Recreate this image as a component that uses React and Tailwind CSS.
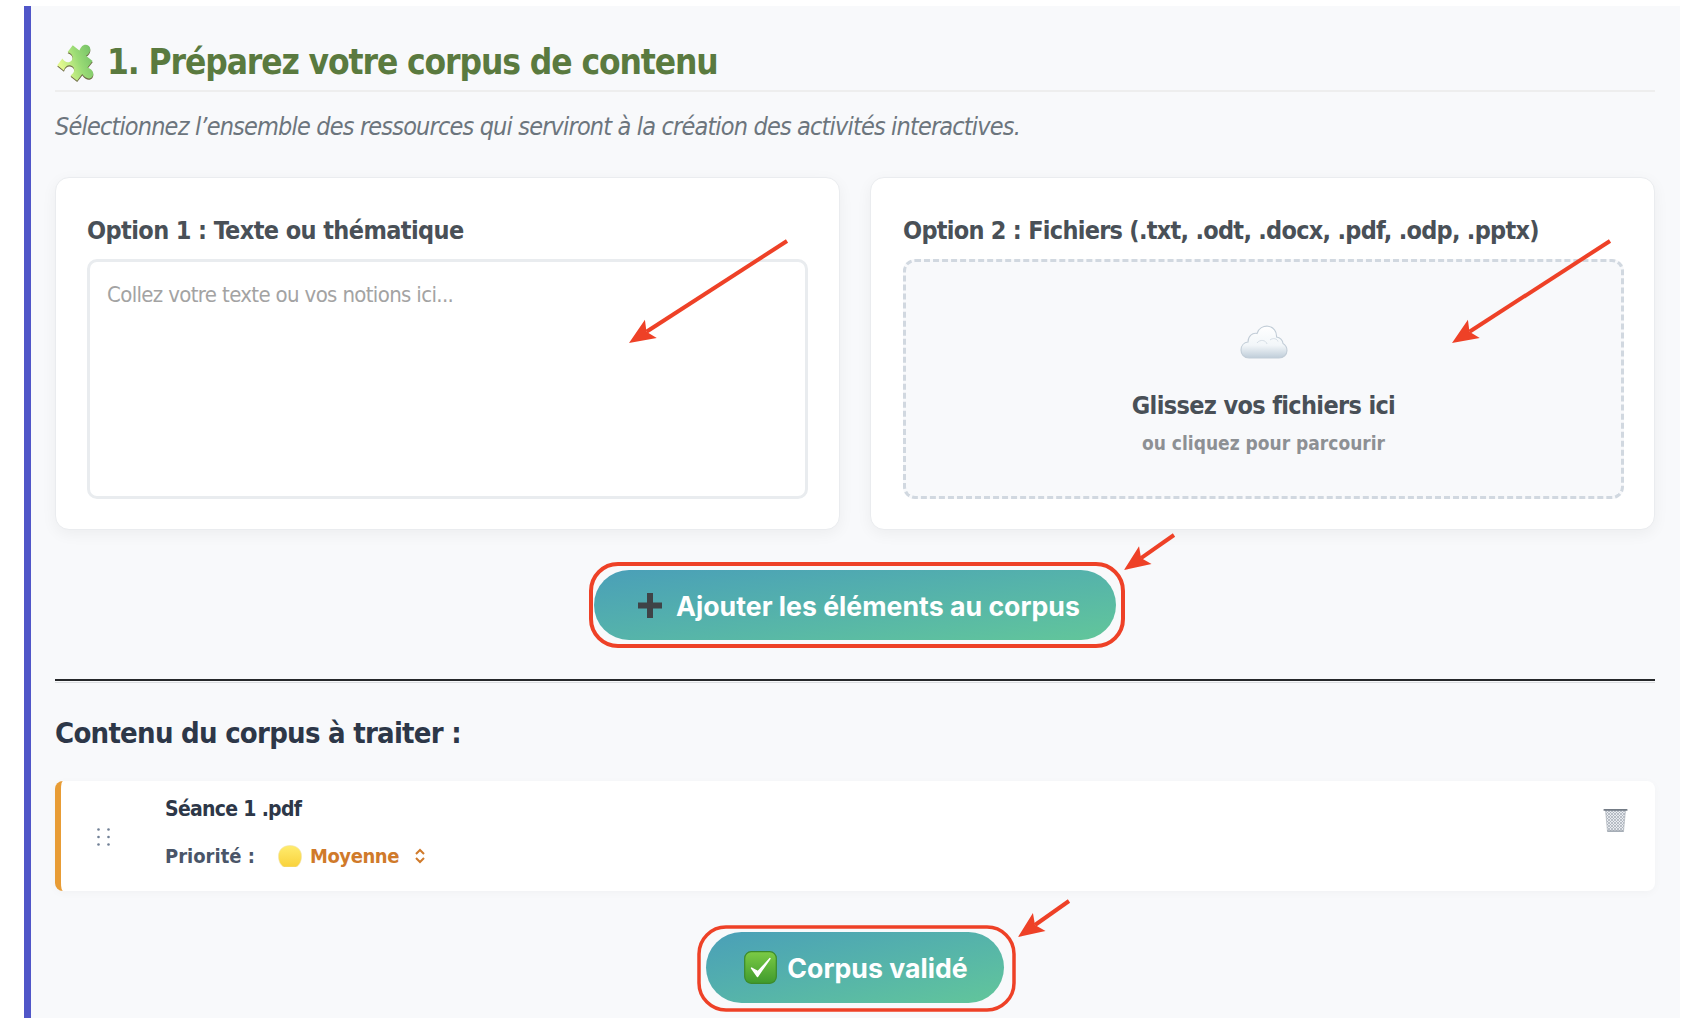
import React from "react";

const F = { fontFamily: '"DejaVu Sans Condensed", "DejaVu Sans", sans-serif' };
const I = { fontFamily: 'Inter, sans-serif' };

function Puzzle() {
  const d = "M-12,-12 H-4 C-6,-18 -3,-21 0,-21 C3,-21 6,-18 4,-12 H12 V-4 C18,-6 21,-3 21,0 C21,3 18,6 12,4 V12 H4 C6,7 3,4 0,4 C-3,4 -6,7 -4,12 H-12 V4 C-7,6 -4,3 -4,0 C-4,-3 -7,-6 -12,-4 Z";
  return (
    <svg width="43" height="42" viewBox="-20 -20 40 40" className="shrink-0 overflow-visible">
      <defs>
        <linearGradient id="pz" x1="0.8" y1="0" x2="0.2" y2="1">
          <stop offset="0" stopColor="#68b862" />
          <stop offset="0.55" stopColor="#9adb75" />
          <stop offset="1" stopColor="#e2f98f" />
        </linearGradient>
      </defs>
      <g transform="translate(-1.5,1) rotate(38)">
        <path transform="translate(0.8,0.9)" fill="#6f6a45" d={d} />
        <path fill="url(#pz)" d={d} />
      </g>
    </svg>
  );
}

function Cloud() {
  return (
    <svg width="48" height="34" viewBox="0 0 48 34">
      <defs>
        <linearGradient id="cl" x1="0" y1="0" x2="0" y2="1">
          <stop offset="0" stopColor="#ffffff" />
          <stop offset="0.6" stopColor="#f2f6f9" />
          <stop offset="1" stopColor="#bfcdd9" />
        </linearGradient>
      </defs>
      <path
        d="M9,33 C3.5,33 1,28.5 1,25 C1,20.5 4,17.5 8,17 C8,11 12.5,7.5 17,8.5 C18.5,3 23.5,0.8 28,1.2 C33.5,2 37,6.5 36.5,12 C40,12.5 42.5,15 43,18.5 C45.5,20 47,22.5 47,25.5 C47,29.5 43.5,33 39,33 Z"
        fill="url(#cl)"
        stroke="#c2cdd7"
        strokeWidth="1.1"
      />
      <path d="M17,18 C20,14 26,15 27,19 M30,15 C33,12.5 37,13.5 38,16.5" fill="none" stroke="#d5dee6" strokeWidth="1" />
    </svg>
  );
}

function Check() {
  return (
    <svg width="33" height="33" viewBox="0 0 33 33" className="shrink-0">
      <defs>
        <linearGradient id="ck" x1="0" y1="0" x2="0" y2="1">
          <stop offset="0" stopColor="#7ccb46" />
          <stop offset="1" stopColor="#3f9a2c" />
        </linearGradient>
      </defs>
      <rect x="0.7" y="0.7" width="31.6" height="31.6" rx="6.5" fill="url(#ck)" stroke="#3c8a2a" strokeWidth="1.2" />
      <path d="M7.5,17 L13.5,25.5 L26,7.5 L14,20.5 Z" fill="#fff" stroke="#fff" strokeWidth="1.4" strokeLinejoin="round" />
    </svg>
  );
}

function Trash() {
  return (
    <svg width="25" height="24" viewBox="0 0 25 24">
      <defs>
        <pattern id="mesh" width="3" height="3" patternUnits="userSpaceOnUse">
          <rect width="3" height="3" fill="#e8ebef" />
          <path d="M0,0 L3,3 M3,0 L0,3" stroke="#a4abb4" strokeWidth="0.7" />
        </pattern>
      </defs>
      <path d="M2.5,2 H22.5 L20.5,23.5 H4.5 Z" fill="url(#mesh)" stroke="#a4abb4" strokeWidth="0.6" />
      <rect x="0.5" y="1" width="24" height="1.8" rx="0.6" fill="#747c86" />
      <rect x="4.5" y="22.3" width="16" height="1.6" fill="#a4abb4" />
    </svg>
  );
}

function Circle() {
  return (
    <svg width="24" height="22" viewBox="0 0 24 22" className="shrink-0">
      <defs>
        <linearGradient id="yc" x1="0" y1="0" x2="0" y2="1">
          <stop offset="0" stopColor="#ffec6e" />
          <stop offset="1" stopColor="#f9d23c" />
        </linearGradient>
      </defs>
      <path d="M6,22 C2,20 0.5,15.5 0.5,11 C0.5,5 5,0.5 12,0.5 C19,0.5 23.5,5 23.5,11 C23.5,15.5 22,20 18,22 Z" fill="url(#yc)" stroke="#f0e2b0" strokeWidth="0.6" />
    </svg>
  );
}

function Handle() {
  return (
    <svg width="13" height="18" viewBox="0 0 13 18" className="shrink-0" fill="#718096">
      <circle cx="1.5" cy="1.5" r="1.3" />
      <circle cx="11.5" cy="1.5" r="1.3" />
      <circle cx="1.5" cy="9" r="1.3" />
      <circle cx="11.5" cy="9" r="1.3" />
      <circle cx="1.5" cy="16.5" r="1.3" />
      <circle cx="11.5" cy="16.5" r="1.3" />
    </svg>
  );
}

function Arrow({ x1, y1, x2, y2, head = 26 }) {
  const a = Math.atan2(y2 - y1, x2 - x1);
  const bx = x2 - Math.cos(a) * head * 0.8;
  const by = y2 - Math.sin(a) * head * 0.8;
  const w = head * 0.42;
  const p1 = `${x2 - Math.cos(a) * head + Math.sin(a) * w},${y2 - Math.sin(a) * head - Math.cos(a) * w}`;
  const p2 = `${x2 - Math.cos(a) * head - Math.sin(a) * w},${y2 - Math.sin(a) * head + Math.cos(a) * w}`;
  return (
    <g>
      <line x1={x1} y1={y1} x2={bx} y2={by} stroke="#ee4127" strokeWidth="4" />
      <polygon points={`${x2},${y2} ${p1} ${bx},${by} ${p2}`} fill="#ee4127" />
    </g>
  );
}

export default function App() {
  return (
    <div className="relative h-[1018px] overflow-hidden bg-white pt-[6px] pl-[24px] pr-[26px]">
      <section className="h-[1100px] border-l-[7px] border-[#5056c8] bg-[#f8f9fb] pr-[25px] pl-[24px] pt-[30px]">
        <h2 style={F} className="flex h-[56px] items-center gap-[9px] border-b-2 border-[#eeeeee] pb-[2px] text-[35px] font-bold tracking-[-1.1px] text-[#5a7a3f]">
          <Puzzle />
          <span>1. Préparez votre corpus de contenu</span>
        </h2>
        <p style={F} className="mt-[20px] h-[30px] text-[25px] leading-[30px] tracking-[-0.83px] italic text-[#6c757d]">
          Sélectionnez l’ensemble des ressources qui serviront à la création des activités interactives.
        </p>

        <div className="mt-[35px] grid grid-cols-2 gap-[30px]">
          <div className="h-[353px] rounded-[14px] border border-[#eaecef] bg-white px-[31px] pt-[38px] shadow-[0_4px_15px_rgba(0,0,0,0.05)]">
            <h3 style={F} className="h-[30px] text-[25px] leading-[30px] tracking-[-0.6px] font-bold text-[#495057]">Option 1 : Texte ou thématique</h3>
            <div className="mt-[13px] h-[240px] rounded-[10px] border-[3px] border-[#e9ecef] px-[17px] pt-[19px]">
              <span style={F} className="block text-[22px] leading-[28px] tracking-[-0.65px] text-[#a3a3a3]">Collez votre texte ou vos notions ici...</span>
            </div>
          </div>
          <div className="h-[353px] rounded-[14px] border border-[#eaecef] bg-white pt-[38px] pr-[30px] pl-[32px] shadow-[0_4px_15px_rgba(0,0,0,0.05)]">
            <h3 style={F} className="h-[30px] text-[25px] leading-[30px] tracking-[-0.73px] font-bold whitespace-nowrap text-[#495057]">Option 2 : Fichiers (.txt, .odt, .docx, .pdf, .odp, .pptx)</h3>
            <div className="mt-[13px] flex h-[240px] flex-col items-center rounded-[12px] border-[3px] border-dashed border-[#d1d8e0] bg-[#f8f9fb] pt-[63px]">
              <Cloud />
              <span style={F} className="mt-[32px] text-[25px] leading-[30px] tracking-[-0.65px] font-bold text-[#495057]">Glissez vos fichiers ici</span>
              <span style={F} className="mt-[9px] text-[19px] leading-[26px] font-bold text-[#8d9094]">ou cliquez pour parcourir</span>
            </div>
          </div>
        </div>

        <div className="mt-[40px] flex justify-center">
          <button style={I} className="flex h-[70px] items-center gap-[14px] rounded-[35px] bg-gradient-to-br from-[#4a9fb8] to-[#62c69a] pr-[36px] pl-[44px] text-[26.7px] font-bold text-white">
            <svg width="24" height="25" viewBox="0 0 24 25" className="shrink-0" fill="#3f4347">
              <rect x="9" y="0" width="6" height="25" />
              <rect x="0" y="9.5" width="24" height="6" />
            </svg>
            <span className="pt-[2px]">Ajouter les éléments au corpus</span>
          </button>
        </div>

        <div className="mt-[39px] h-[4px] border-t-2 border-b border-t-[#26282a] border-b-[#dcdee1]"></div>

        <h3 style={F} className="mt-[30px] h-[40px] text-[29px] leading-[40px] tracking-[-0.75px] font-bold text-[#2d3748]">Contenu du corpus à traiter :</h3>

        <div className="mt-[28px] flex h-[110px] rounded-[8px] border-l-[6px] border-[#e89c35] bg-white shadow-[0_2px_8px_rgba(0,0,0,0.03)]">
          <div className="ml-[36px] self-center pt-[2px]"><Handle /></div>
          <div className="ml-[55px] flex flex-col pt-[13px]">
            <span style={F} className="h-[30px] text-[21px] leading-[30px] tracking-[-0.7px] font-bold text-[#2d3748]">Séance 1 .pdf</span>
            <div className="mt-[17px] flex h-[30px] items-center">
              <span style={F} className="w-[113px] text-[20px] font-bold text-[#4a5568]">Priorité :</span>
              <Circle />
              <span style={F} className="ml-[8px] text-[20px] tracking-[-0.45px] font-bold text-[#d07a2a]">Moyenne</span>
              <svg width="12" height="16" viewBox="0 0 12 16" className="ml-[15px]" fill="none" stroke="#d07a2a" strokeWidth="2">
                <path d="M2,6 L6,2 L10,6 M2,10 L6,14 L10,10" />
              </svg>
            </div>
          </div>
          <div className="mt-[27px] mr-[27px] ml-auto"><Trash /></div>
        </div>

        <div className="mt-[41px] flex justify-center">
          <button style={I} className="flex h-[71px] items-center gap-[10px] rounded-[36px] bg-gradient-to-br from-[#4a9fb8] to-[#62c69a] pr-[36px] pl-[38px] text-[26.7px] font-bold text-white">
            <Check />
            <span className="pt-[2px]">Corpus validé</span>
          </button>
        </div>
      </section>

      <svg className="pointer-events-none absolute top-0 left-0" width="1706" height="1018" viewBox="0 0 1706 1018">
        <rect x="591" y="564" width="532" height="82" rx="27" fill="none" stroke="#ee4127" strokeWidth="4" />
        <rect x="699" y="927" width="315" height="83" rx="27" fill="none" stroke="#ee4127" strokeWidth="3.5" />
        <Arrow x1={787} y1={241} x2={629} y2={343} />
        <Arrow x1={1610} y1={241} x2={1452} y2={343} />
        <Arrow x1={1174} y1={535} x2={1124} y2={570} />
        <Arrow x1={1069} y1={901} x2={1018} y2={937} />
      </svg>
    </div>
  );
}
